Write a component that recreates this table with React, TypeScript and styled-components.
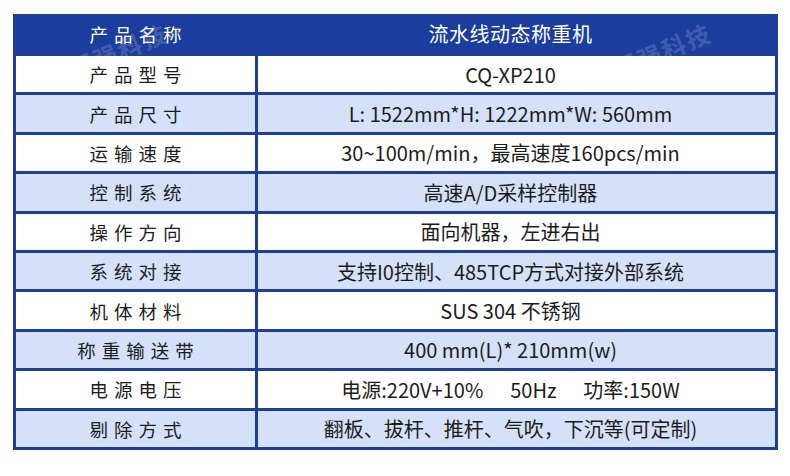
import React from "react";
import styled, { createGlobalStyle } from "styled-components";

const Global = createGlobalStyle`
  html, body { margin: 0; padding: 0; background: #ffffff; }
  body { font-family: "Noto Sans CJK SC", "Noto Sans", sans-serif; }
`;

const Page = styled.div`
  width: 790px;
  height: 476px;
  padding: 14px 0 0 13px;
  box-sizing: border-box;
  background: #ffffff;
`;

const Table = styled.div`
  position: relative;
  width: 765px;
  box-sizing: border-box;
  display: grid;
  grid-template-columns: 239px 517px;
  column-gap: 3px;
  row-gap: 3px;
  padding: 0 3px 3px 3px;
  background: #1f3e96;
  overflow: hidden;
`;

const HeadCell = styled.div<{ $spaced?: boolean }>`
  height: 39px;
  box-sizing: border-box;
  display: flex;
  align-items: center;
  justify-content: center;
  color: #ffffff;
  font-size: ${(p) => (p.$spaced ? "18.5px" : "20px")};
  letter-spacing: ${(p) => (p.$spaced ? "6px" : "0.5px")};
  padding: ${(p) => (p.$spaced ? "0 0 0 6px" : "0 12px 0 0")};
  background: #1b3d9e;
`;

const Cell = styled.div<{ $alt: boolean; $spaced?: boolean }>`
  height: 36.4px;
  box-sizing: border-box;
  display: flex;
  align-items: center;
  justify-content: center;
  color: #1c1c1c;
  font-size: ${(p) => (p.$spaced ? "18.5px" : "20px")};
  white-space: pre;
  background: ${(p) => (p.$alt ? "#d5e1f8" : "#ffffff")};
  letter-spacing: ${(p) => (p.$spaced ? "6px" : "0")};
  padding: ${(p) => (p.$spaced ? "0 0 0 6px" : "0 12px 0 0")};
  font-weight: 400;
`;

const Watermark = styled.div<{ $x: number; $y: number }>`
  position: absolute;
  left: ${(p) => p.$x}px;
  top: ${(p) => p.$y}px;
  transform: rotate(-22deg);
  transform-origin: left top;
  color: rgba(255, 255, 255, 0.18);
  font-size: 24px;
  line-height: 26px;
  font-weight: 700;
  letter-spacing: 2px;
  pointer-events: none;
  white-space: nowrap;
`;

const rows: [string, string][] = [
  ["产品型号", "CQ-XP210"],
  ["产品尺寸", "L: 1522mm*H: 1222mm*W: 560mm"],
  ["运输速度", "30~100m/min，最高速度160pcs/min"],
  ["控制系统", "高速A/D采样控制器"],
  ["操作方向", "面向机器，左进右出"],
  ["系统对接", "支持I0控制、485TCP方式对接外部系统"],
  ["机体材料", "SUS 304 不锈钢"],
  ["称重输送带", "400 mm(L)* 210mm(w)"],
  ["电源电压", "电源:220V+10%      50Hz      功率:150W"],
  ["剔除方式", "翻板、拔杆、推杆、气吹，下沉等(可定制)"],
];

export default function App() {
  return (
    <>
      <Global />
      <Page>
        <Table>
          <HeadCell $spaced>产品名称</HeadCell>
          <HeadCell>流水线动态称重机</HeadCell>
          {rows.map(([k, v], i) => (
            <React.Fragment key={k}>
              <Cell $alt={i % 2 === 1} $spaced>
                {k}
              </Cell>
              <Cell $alt={i % 2 === 1}>{v}</Cell>
            </React.Fragment>
          ))}
          <Watermark $x={52} $y={44}>超强科技</Watermark>
          <Watermark $x={596} $y={44}>超强科技</Watermark>
        </Table>
      </Page>
    </>
  );
}
